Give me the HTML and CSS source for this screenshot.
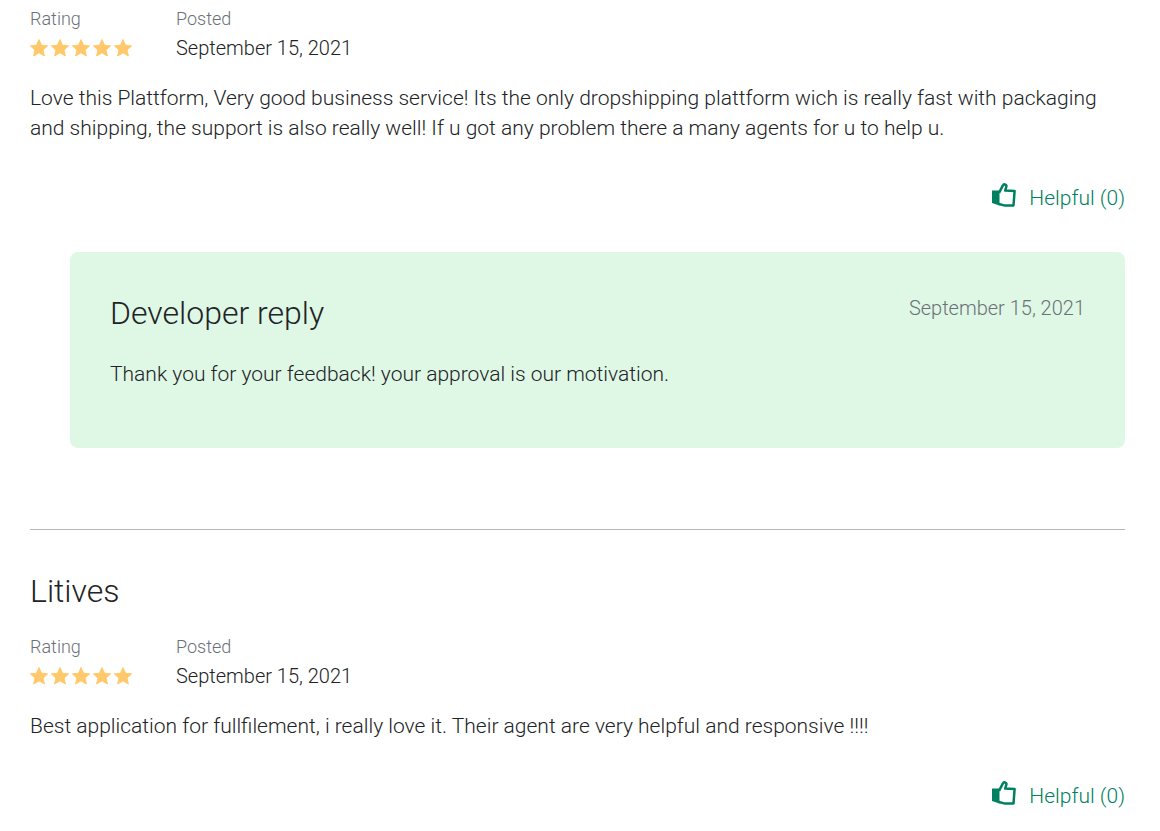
FILE: index.html
```html
<!DOCTYPE html>
<html lang="en">
<head>
<meta charset="utf-8">
<meta name="viewport" content="width=device-width, initial-scale=1">
<title>Reviews</title>
<link rel="stylesheet" href="styles.css">
</head>
<body>
<svg class="sprite" aria-hidden="true">
  <symbol id="star" viewBox="0 0 18 18"><path d="M9 .6 11.5 6.2 17.6 6.9 13 11 14.4 17 9 13.8 3.6 17 5 11 .4 6.9 6.500 6.200Z" stroke="currentColor" stroke-width="1" stroke-linejoin="round"/></symbol>
  <symbol id="thumb" viewBox="0 0 24 24"><path d="M0 7.500H7.500V22.500L0 20Z"/><path d="M7 9.800 10.800 2.600C11.600 .6 14.800 1.200 14.400 3.400L13.200 7.500 22.600 8 21.500 22.500 13 22.600 6 20.800" fill="none" stroke="currentColor" stroke-width="2.500" stroke-linejoin="round"/></symbol>
</svg>
<main class="reviews">
  <article class="review">
    <div class="meta">
      <div class="meta-item">
        <span class="label">Rating</span>
        <span class="stars" role="img" aria-label="5 of 5 stars"><svg><use href="#star"/></svg><svg><use href="#star"/></svg><svg><use href="#star"/></svg><svg><use href="#star"/></svg><svg><use href="#star"/></svg></span>
      </div>
      <div class="meta-item">
        <span class="label">Posted</span>
        <time datetime="2021-09-15">September 15, 2021</time>
      </div>
    </div>
    <p class="text">Love this Plattform, Very good business service! Its the only dropshipping plattform wich is really fast with packaging and shipping, the support is also really well! If u got any problem there a many agents for u to help u.</p>
    <button class="helpful" type="button"><svg><use href="#thumb"/></svg>Helpful (0)</button>
    <section class="reply">
      <header class="reply-head">
        <h3 class="title">Developer reply</h3>
        <time class="reply-date" datetime="2021-09-15">September 15, 2021</time>
      </header>
      <p class="reply-text">Thank you for your feedback! your approval is our motivation.</p>
    </section>
  </article>
  <article class="review">
    <h3 class="title">Litives</h3>
    <div class="meta">
      <div class="meta-item">
        <span class="label">Rating</span>
        <span class="stars" role="img" aria-label="5 of 5 stars"><svg><use href="#star"/></svg><svg><use href="#star"/></svg><svg><use href="#star"/></svg><svg><use href="#star"/></svg><svg><use href="#star"/></svg></span>
      </div>
      <div class="meta-item">
        <span class="label">Posted</span>
        <time datetime="2021-09-15">September 15, 2021</time>
      </div>
    </div>
    <p class="text">Best application for fullfilement, i really love it. Their agent are very helpful and responsive !!!!</p>
    <button class="helpful" type="button"><svg><use href="#thumb"/></svg>Helpful (0)</button>
  </article>
</main>
</body>
</html>
```
FILE: styles.css
```css
* { box-sizing: border-box; }
body {
  margin: 0;
  background: #fff;
  color: #212326;
  font: 300 21px/30px Roboto, "Liberation Sans", sans-serif;
}
h3, p { margin: 0; }
time { font-size: 20px; }
.sprite { display: none; }
.reviews { padding: 7px 35px 20px 30px; }
.review { display: flex; flex-direction: column; }
.review + .review {
  margin-top: 81px;
  padding-top: 41px;
  border-top: 1px solid #b4b7ba;
}
.title { font-size: 32px; font-weight: 300; line-height: 40px; }
.review > .title { margin-bottom: 24px; }
.meta { display: flex; gap: 44px; }
.meta-item { display: flex; flex-direction: column; gap: 2px; }
.label { color: #6b7177; font-size: 18px; line-height: 24px; }
.stars { display: flex; align-items: center; gap: 3px; height: 30px; color: #ffc96b; }
.stars svg { width: 18px; height: 18px; fill: currentColor; }
.text { margin-top: 20px; }
.helpful {
  display: flex;
  align-items: center;
  align-self: flex-end;
  gap: 13px;
  margin-top: 40px;
  padding: 0;
  border: 0;
  background: none;
  color: #008060;
  font: inherit;
  cursor: pointer;
}
.helpful svg { width: 24px; height: 24px; margin-bottom: 6px; fill: currentColor; }
.reply {
  margin: 39px 0 0 40px;
  padding: 41px 40px 59px;
  border-radius: 8px;
  background: #dff7e5;
}
.reply-head { display: flex; justify-content: space-between; align-items: flex-start; }
.reply-date { color: #6b7177; }
.reply-text { margin-top: 26px; }
```
